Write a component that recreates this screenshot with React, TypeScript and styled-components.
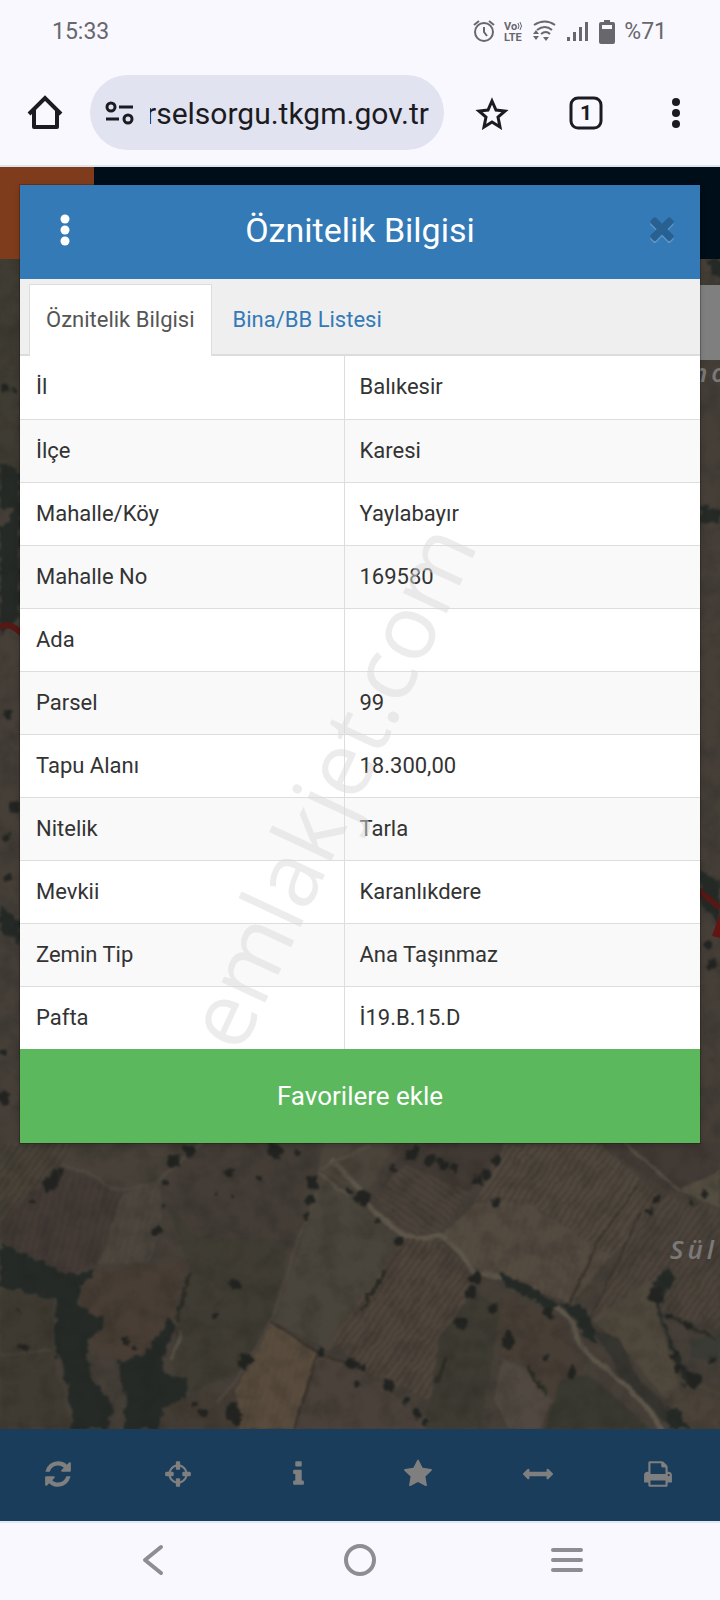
import React, { useState } from 'react';
import styled, { createGlobalStyle } from 'styled-components';

const GlobalStyle = createGlobalStyle`
  * {
    box-sizing: border-box;
  }
  body {
    margin: 0;
    font-family: Roboto, "Liberation Sans", sans-serif;
    background: #f9f8ff;
    color: #333;
  }
  button {
    padding: 0;
    border: 0;
    background: none;
    color: inherit;
    font: inherit;
    cursor: pointer;
  }
  svg {
    display: block;
  }
`;

const Screen = styled.div`
  position: relative;
  display: flex;
  flex-direction: column;
  min-height: 100vh;
  overflow: hidden;
`;

const StatusBar = styled.div`
  display: flex;
  align-items: center;
  justify-content: space-between;
  height: 60px;
  padding: 4px 53px 0 52px;
  font-size: 23px;
  line-height: 28px;
  color: #68676c;
`;

const StatusIcons = styled.div`
  display: flex;
  align-items: center;
  gap: 9px;
`;

const BrowserBar = styled.div`
  display: flex;
  align-items: center;
  height: 107px;
  border-bottom: 2px solid #dde4ee;
  color: #1b1b21;
`;

const BarButton = styled.button<{ $width: number }>`
  display: flex;
  align-items: center;
  justify-content: center;
  flex: none;
  width: ${({ $width }) => $width}px;
  height: 75px;
`;

const AddressBox = styled.label`
  display: flex;
  align-items: center;
  flex: 1;
  gap: 16px;
  min-width: 0;
  height: 75px;
  padding: 0 15px 0 14px;
  border-radius: 38px;
  background: #e2e3f0;
`;

const AddressInput = styled.input`
  flex: 1;
  min-width: 0;
  padding: 2px 0 0;
  border: 0;
  outline: 0;
  background: none;
  color: #1b1b21;
  font: 30px/40px Roboto, "Liberation Sans", sans-serif;
  direction: rtl;
`;

const Page = styled.div`
  display: grid;
  flex: 1;
`;

const Site = styled.div`
  display: flex;
  flex-direction: column;
  grid-area: 1 / 1;
  min-width: 0;
`;

const SiteHeader = styled.div`
  height: 92px;
  background: linear-gradient(to right, #fe7838 94px, #001c34 94px);
`;

const MapSvg = styled.svg`
  flex: 1;
  width: 100%;
  min-height: 0;
  height: 0;
`;

const MapLabel = styled.text`
  fill: #f4f2ee;
  font: italic 600 26px "Open Sans", "Noto Sans", sans-serif;
  letter-spacing: 4px;
`;

const SiteToolbar = styled.nav`
  display: grid;
  grid-template-columns: repeat(6, 1fr);
  height: 92px;
  background: #337ab7;
  color: #fff;
`;

const ToolButton = styled.button`
  display: flex;
  align-items: center;
  justify-content: center;
  padding: 0 4px 2px 0;
`;

const Backdrop = styled.div`
  grid-area: 1 / 1;
  z-index: 1;
  min-width: 0;
  padding: 18px 20px;
  background: rgba(0, 0, 0, 0.5);
`;

const Dialog = styled.section`
  background: #fff;
  box-shadow: 0 0 0 1px rgba(0, 0, 0, 0.2), 0 3px 6px rgba(0, 0, 0, 0.2);
`;

const DialogHeader = styled.header`
  display: grid;
  grid-template-columns: 90px 1fr 90px;
  align-items: center;
  height: 94px;
  padding-bottom: 4px;
  background: #337ab7;
  color: #fff;
`;

const DialogTitle = styled.h1`
  margin: 0;
  font-size: 34px;
  font-weight: 400;
  line-height: 48px;
  text-align: center;
`;

const MenuButton = styled.button`
  display: flex;
  justify-content: center;
`;

const CloseButton = styled.button`
  display: flex;
  justify-content: flex-end;
  padding-right: 24px;
  color: #000;
  opacity: 0.2;

  svg {
    filter: drop-shadow(0 2px 0 #fff);
  }
`;

const Tabs = styled.div`
  display: flex;
  align-items: flex-end;
  gap: 4px;
  height: 77px;
  padding: 0 9px;
  background: #efefef;
  box-shadow: inset 0 -2px 0 #dcdcdc;
`;

const Tab = styled.button<{ $active: boolean }>`
  height: 72px;
  padding: 0 16px 2px;
  border: 1px solid ${({ $active }) => ($active ? '#ddd' : 'transparent')};
  border-bottom: 0;
  background: ${({ $active }) => ($active ? '#fff' : 'transparent')};
  color: ${({ $active }) => ($active ? '#555' : '#337ab7')};
  font-size: 22px;
  line-height: 32px;
`;

const InfoTable = styled.table`
  width: 100%;
  border-collapse: collapse;
  table-layout: fixed;
  font-size: 22px;
  line-height: 30px;
  text-align: left;
`;

const Row = styled.tr`
  height: 63px;
  border-bottom: 1px solid #ddd;

  &:nth-child(even) {
    background: #f9f9f9;
  }
  &:last-child {
    border-bottom: 0;
  }
`;

const NameCell = styled.th`
  width: 324px;
  padding: 0 16px;
  border-right: 1px solid #ddd;
  font-weight: 400;
`;

const ValueCell = styled.td`
  padding: 0 15px;
`;

const FavoriteButton = styled.button`
  display: block;
  width: 100%;
  height: 94px;
  background: #5cb85c;
  color: #fff;
  font-size: 26px;
  line-height: 36px;
`;

const PhoneNav = styled.nav`
  display: grid;
  grid-template-columns: repeat(3, 1fr);
  height: 79px;
  padding: 0 50px 3px;
  border-top: 2px solid #dfe8f6;
  background: #f9f8ff;
  color: #8e8d93;
`;

const NavButton = styled.button`
  display: flex;
  align-items: center;
  justify-content: center;
`;

const Watermark = styled.div`
  position: absolute;
  inset: 0;
  z-index: 2;
  display: flex;
  align-items: center;
  justify-content: center;
  pointer-events: none;

  span {
    padding-bottom: 70px;
    transform: rotate(-65deg);
    color: rgba(217, 217, 217, 0.5);
    font: 90px/1 "Open Sans", "Noto Sans", sans-serif;
  }
`;

interface Glyph {
  width: number;
  path: string;
}

const glyphs: Record<string, Glyph> = {
  refresh: {
    width: 1536,
    path: 'M1511 1056q0 5-1 7-64 268-268 434.5T764 1664q-146 0-282.5-55T238 1452l-129 129q-19 19-45 19t-45-19-19-45v-448q0-26 19-45t45-19h448q26 0 45 19t19 45-19 45l-137 137q71 66 161 102t187 36q134 0 250-65t186-179q11-17 53-117 8-23 30-23h192q13 0 22.5 9.5t9.5 22.5zm25-800v448q0 26-19 45t-45 19h-448q-26 0-45-19t-19-45 19-45l138-138Q969 384 768 384q-134 0-250 65T332 628q-11 17-53 117-8 23-30 23H50q-13 0-22.5-9.5T18 736v-7q65-268 270-434.5T768 128q146 0 284 55.5T1297 340l130-129q19-19 45-19t45 19 19 45z',
  },
  crosshairs: {
    width: 1536,
    path: 'M1197 1024h-109q-26 0-45-19t-19-45v-128q0-26 19-45t45-19h109q-32-108-112.5-188.5T896 467v109q0 26-19 45t-45 19H704q-26 0-45-19t-19-45V467q-108 32-188.5 112.5T339 768h109q26 0 45 19t19 45v128q0 26-19 45t-45 19H339q32 108 112.5 188.5T640 1325v-109q0-26 19-45t45-19h128q26 0 45 19t19 45v109q108-32 188.5-112.5T1197 1024zm339-192v128q0 26-19 45t-45 19h-143q-37 161-154.5 278.5T896 1457v143q0 26-19 45t-45 19H704q-26 0-45-19t-19-45v-143q-161-37-278.5-154.5T207 1024H64q-26 0-45-19t-19-45V832q0-26 19-45t45-19h143q37-161 154.5-278.5T640 335V192q0-26 19-45t45-19h128q26 0 45 19t19 45v143q161 37 278.5 154.5T1329 768h143q26 0 45 19t19 45z',
  },
  info: {
    width: 640,
    path: 'M640 1344v128q0 26-19 45t-45 19H64q-26 0-45-19t-19-45v-128q0-26 19-45t45-19h64V896H64q-26 0-45-19t-19-45V704q0-26 19-45t45-19h384q26 0 45 19t19 45v576h64q26 0 45 19t19 45zM512 192v192q0 26-19 45t-45 19H192q-26 0-45-19t-19-45V192q0-26 19-45t45-19h256q26 0 45 19t19 45z',
  },
  star: {
    width: 1664,
    path: 'M1664 647q0 22-26 48l-363 354 86 500q1 7 1 20 0 21-10.5 35.5T1321 1619q-19 0-40-12l-449-236-449 236q-22 12-40 12-21 0-31.5-14.5T301 1569q0-6 2-20l86-500L25 695Q0 668 0 647q0-37 56-46l502-73L783 73q19-41 49-41t49 41l225 455 502 73q56 9 56 46z',
  },
  measure: {
    width: 1792,
    path: 'M1792 896q0 26-19 45l-256 256q-19 19-45 19t-45-19-19-45v-128H384v128q0 26-19 45t-45 19-45-19L19 941Q0 922 0 896t19-45l256-256q19-19 45-19t45 19 19 45v128h1024V640q0-26 19-45t45-19 45 19l256 256q19 19 19 45z',
  },
  print: {
    width: 1664,
    path: 'M384 1536h896v-256H384v256zm0-640h896V512h-160q-40 0-68-28t-28-68V256H384v640zm1152 64q0-26-19-45t-45-19-45 19-19 45 19 45 45 19 45-19 19-45zm128 0v416q0 13-9.5 22.5T1632 1408h-224v160q0 40-28 68t-68 28H352q-40 0-68-28t-28-68v-160H32q-13 0-22.5-9.5T0 1376V960q0-79 56.5-135.5T192 768h64V224q0-40 28-68t68-28h672q40 0 88 20t76 48l152 152q28 28 48 76t20 88v256h64q79 0 135.5 56.5T1664 960z',
  },
  times: {
    width: 1408,
    path: 'M1298 1214q0 40-28 68l-136 136q-28 28-68 28t-68-28l-294-294-294 294q-28 28-68 28t-68-28L138 1282q-28-28-28-68t28-68l294-294-294-294q-28-28-28-68t28-68l136-136q28-28 68-28t68 28l294 294 294-294q28-28 68-28t68 28l136 136q28 28 28 68t-28 68L976 852l294 294q28 28 28 68z',
  },
};

const Icon: React.FC<{ name: string; size: number }> = ({ name, size }) => {
  const { width, path } = glyphs[name];
  return (
    <svg
      width={Math.round((width * size) / 1792)}
      height={size}
      viewBox={`0 0 ${width} 1792`}
      fill="currentColor"
      aria-hidden="true"
    >
      <path d={path} />
    </svg>
  );
};

const Dots: React.FC<{ r: number }> = ({ r }) => (
  <svg width="12" height="34" viewBox="0 0 12 34" fill="currentColor" aria-hidden="true">
    <circle cx="6" cy="6" r={r} />
    <circle cx="6" cy="17" r={r} />
    <circle cx="6" cy="28" r={r} />
  </svg>
);

const PhoneStatus = () => (
  <StatusBar>
    <span>15:33</span>
    <StatusIcons>
      <svg width="22" height="24" viewBox="0 0 22 24" fill="none" stroke="currentColor" strokeWidth="2">
        <circle cx="11" cy="12" r="9" />
        <path d="M11 7v5l3 4M1 5l5-4M21 5l-5-4" />
      </svg>
      <svg width="20" height="24" viewBox="0 0 20 24" fill="currentColor" fontFamily="Roboto" fontWeight="700">
        <text x="0" y="10" fontSize="11">Vo</text>
        <text x="0" y="21" fontSize="11">LTE</text>
        <path d="M14 3q2 3 0 6M16 2q3 4 0 8" fill="none" stroke="currentColor" />
      </svg>
      <svg width="24" height="24" viewBox="0 0 24 24" fill="none" stroke="currentColor">
        <path d="M1 5q11-7 21 0M4 10q8-6 15 0M8 14q5-4 9 0" strokeWidth="2" />
        <path d="M10 17h6l-3 4zM0 14l3-4 3 4zM0 16h6l-3 4z" fill="currentColor" stroke="none" />
      </svg>
      <svg width="24" height="24" viewBox="0 0 24 24" fill="currentColor">
        <path d="M1 17h3v4H1zM7 12h3v9H7zM13 7h3v14h-3zM19 2h3v19h-3z" />
      </svg>
      <svg width="16" height="26" viewBox="0 0 16 26" fill="currentColor">
        <path
          fillRule="evenodd"
          d="M5 1h6v2h3q2 0 2 2v18q0 2-2 2H2q-2 0-2-2V5q0-2 2-2h3zM3 6v4h10V6z"
        />
      </svg>
      <span>%71</span>
    </StatusIcons>
  </StatusBar>
);

const Browser = () => (
  <BrowserBar>
    <BarButton $width={90} aria-label="Ana sayfa">
      <svg width="36" height="36" viewBox="0 0 36 36" fill="none" stroke="currentColor" strokeWidth="4">
        <path d="M2 19L18 3l16 16" />
        <path d="M7 15v17h23V15" strokeLinejoin="round" />
      </svg>
    </BarButton>
    <AddressBox>
      <svg width="30" height="26" viewBox="0 0 30 26" fill="none" stroke="currentColor" strokeWidth="3">
        <circle cx="7" cy="7" r="4" />
        <circle cx="24" cy="19" r="4" />
        <path d="M15 7h14M2 19h13" />
      </svg>
      <AddressInput aria-label="Adres" defaultValue="rselsorgu.tkgm.gov.tr" />
    </AddressBox>
    <BarButton $width={96} aria-label="Yer işareti">
      <svg width="34" height="34" viewBox="0 0 34 34" fill="none" stroke="currentColor" strokeWidth="3">
        <path d="M17 5l4 9 9 1-7 6 2 10-8-5-8 5 2-10-7-6 9-1z" />
      </svg>
    </BarButton>
    <BarButton $width={92} aria-label="Sekmeler">
      <svg width="36" height="36" viewBox="0 0 36 36">
        <rect x="3" y="3" width="30" height="30" rx="7" fill="none" stroke="currentColor" strokeWidth="3" />
        <text x="18" y="25" textAnchor="middle" fontFamily="Roboto" fontSize="21" fontWeight="700" fill="currentColor">
          1
        </text>
      </svg>
    </BarButton>
    <BarButton $width={88} aria-label="Menü">
      <Dots r={4} />
    </BarButton>
  </BrowserBar>
);

// [fill, outline, furrow pattern]
const fields: [string, string, string?][] = [
  ['#928674', 'M0 1143H75L62 1166 0 1222z', 'furrowUp'],
  ['#8e8272', 'M75 1140H180L166 1170 130 1190 96 1182 62 1163z'],
  ['#84726a', 'M62 1166L100 1182 122 1195 98 1264 70 1276 0 1240V1222z', 'furrowSteep'],
  ['#958979', 'M122 1195L160 1180 162 1230 150 1262 98 1264z', 'furrowSteep'],
  ['#877a6d', 'M180 1150L205 1138H320L305 1185 290 1240 200 1245 168 1210z'],
  ['#7f7867', 'M165 1200L195 1235 290 1240 272 1320 240 1370 185 1395 170 1360 190 1270z'],
  ['#907c6a', 'M88 1270L185 1262 170 1335 140 1365 95 1355 80 1300z'],
  ['#7d7564', 'M0 1290H55L52 1350 0 1355z'],
  ['#7f7666', 'M0 1355L52 1352 72 1429H0z'],
  ['#877868', 'M160 1400L235 1390 245 1429H150z'],
  ['#b0967a', 'M272 1323L318 1352 295 1429H240L236 1390z', 'furrowSteep'],
  ['#948375', 'M318 1352L356 1366 440 1429H295z'],
  ['#938a78', 'M318 1175L360 1205 402 1240 330 1350 272 1320 303 1240z'],
  ['#968978', 'M325 1140H400L365 1195 318 1170z'],
  ['#827268', 'M405 1143H510L470 1190 415 1180 380 1190z'],
  ['#988878', 'M375 1195L405 1165 470 1192 435 1238 400 1238z', 'furrowDown'],
  ['#a08d7c', 'M402 1240L440 1240 475 1275 430 1400 365 1370 330 1340z', 'furrowUp'],
  ['#a3927f', 'M505 1145H600L660 1195 610 1260 540 1210 475 1200z', 'furrowUp'],
  ['#a5937f', 'M475 1203L525 1202 610 1256 572 1304 475 1268 440 1236z', 'furrowSteep'],
  ['#857469', 'M600 1143H720V1170L668 1192z'],
  ['#a89b83', 'M680 1189L720 1170V1208L700 1200z'],
  ['#9b8b7a', 'M665 1195L720 1210V1330L660 1310 640 1360 590 1318 625 1240z', 'furrowUp'],
  ['#9f907a', 'M592 1320L650 1280 680 1385 665 1400 625 1350z'],
  ['#7a7664', 'M440 1338L475 1290 500 1310 480 1429H425z'],
  ['#8f7d6c', 'M500 1290L560 1320 580 1365 600 1429H530L500 1360z'],
  ['#a29282', 'M502 1358L530 1370 552 1400 540 1429H510L494 1400z'],
  ['#747262', 'M560 1380L590 1375 650 1429H545z'],
  ['#968573', 'M672 1390L720 1400V1429H675z'],
  ['#76766a', 'M690 1340L720 1335V1360L690 1358z'],
];

const tracks: [string, number, string][] = [
  ['#bbac95', 5, 'M330 1160q25 18 42 50 20 15 32 26 14 5 36 0 20 12 34 37 40 2 62 25 30 12 37 26 6 30 35 45 45 40 55 64'],
  ['#9c8f80', 3, 'M60 1165q30 5 48 22 26 6 50-7 24-20 45-38M325 1175l-25 60-28 85-35 60-20 22'],
  ['#ad9f8a', 3, 'M180 1330q0 12-9 30M370 1145l-50 24M318 1172l30 24M680 1190l-62-52'],
  ['#6d6355', 2, 'M272 1322l46 30 35 14M636 1186l-40 60-26 58M318 1352l-24 76M640 1212l-48 105'],
  ['#94866f', 3, 'M680 1380l40 12M660 1320l20 65-5 44M0 1290l55-2M0 1355l52-5'],
];

const woods = [
  'M0 1242L18 1252 42 1262 68 1275 98 1268 80 1288 78 1305 102 1318 104 1329 86 1340 92 1380 112 1402 108 1429H72L70 1395 54 1345 56 1300 0 1287z',
  'M116 1362l30-8 22-34 8 6-16 40 10 10 18 4-4 18-20 10-6 22h-34l2-32z',
  'M558 1302l22 2 12 20 6 22-12-8-12-20z',
  'M664 1408l14 2 12 19h-20z',
  'M670 1265l4 16-16 20 4 16 18 42 12 20-8 6-10-26-16-48-6-28z',
  'M500 1272l40 20 18 14-8 4-50-30z',
  'M0 460l20 12v36H0zM0 530q16-14 20-34v120l-20 20z',
  'M0 905l20 16v24L0 930zM700 870l20 14v44l-20-26zM700 505l20 6v12h-20z',
  'M706 259h14v26z',
];

const trees: [number, number, number][] = [
  [189, 1151, 7], [174, 1161, 6], [50, 1184, 7], [55, 1178, 6], [62, 1172, 3], [32, 1203, 2],
  [276, 1151, 8], [297, 1154, 3], [312, 1181, 6], [310, 1201, 5], [305, 1215, 4], [229, 1172, 4],
  [259, 1178, 3], [166, 1183, 4], [157, 1230, 5], [163, 1206, 2], [217, 1193, 2], [231, 1195, 2],
  [363, 1198, 8], [350, 1192, 3], [393, 1168, 3], [410, 1156, 6], [416, 1152, 5], [430, 1160, 5],
  [442, 1164, 6], [455, 1168, 4], [477, 1180, 6], [487, 1173, 5], [497, 1160, 5], [496, 1201, 5],
  [376, 1220, 2], [399, 1241, 4], [471, 1293, 6], [476, 1278, 5], [461, 1323, 6], [493, 1308, 5],
  [548, 1313, 6], [508, 1343, 7], [509, 1334, 5], [545, 1356, 3], [390, 1386, 6], [362, 1368, 4],
  [417, 1413, 5], [406, 1400, 4], [425, 1423, 3], [247, 1358, 6], [243, 1363, 5], [233, 1412, 8],
  [238, 1420, 5], [203, 1413, 4], [194, 1404, 3], [321, 1352, 3], [352, 1364, 6], [356, 1384, 4],
  [656, 1200, 4], [648, 1212, 3], [656, 1297, 8], [694, 1380, 8], [668, 1315, 4], [688, 1325, 4],
  [674, 1355, 4], [678, 1368, 4], [712, 1361, 4], [705, 1194, 3], [692, 1203, 3], [572, 1371, 5],
  [125, 1341, 4], [134, 1348, 3], [22, 1347, 4], [18, 1312, 2], [235, 1285, 5], [214, 1315, 4],
  [6, 388, 4], [14, 391, 3], [8, 714, 5], [14, 807, 5], [7, 837, 3], [8, 877, 3], [4, 1098, 6],
  [708, 945, 5], [712, 964, 6], [4, 1052, 3],
];

const AerialMap = () => (
  <MapSvg viewBox="0 259 720 1170" preserveAspectRatio="xMidYMid slice" aria-hidden="true">
    <defs>
      <pattern id="furrowUp" width="6" height="20" patternUnits="userSpaceOnUse" patternTransform="rotate(35)">
        <path d="M1 0v20" stroke="#58483b" strokeOpacity=".3" strokeWidth="2" />
      </pattern>
      <pattern id="furrowDown" width="6" height="20" patternUnits="userSpaceOnUse" patternTransform="rotate(-55)">
        <path d="M1 0v20" stroke="#58483b" strokeOpacity=".25" strokeWidth="2" />
      </pattern>
      <pattern id="furrowSteep" width="7" height="20" patternUnits="userSpaceOnUse" patternTransform="rotate(15)">
        <path d="M1 0v20" stroke="#d0bfa0" strokeOpacity=".12" strokeWidth="2" />
      </pattern>
      <filter id="soft" x="-5%" y="-5%" width="110%" height="110%" colorInterpolationFilters="sRGB">
        <feTurbulence type="fractalNoise" baseFrequency=".06" numOctaves="3" seed="4" />
        <feDisplacementMap in="SourceGraphic" scale="5" xChannelSelector="R" yChannelSelector="G" />
        <feGaussianBlur stdDeviation=".8" />
      </filter>
      <filter id="rough" x="-5%" y="-5%" width="110%" height="110%" colorInterpolationFilters="sRGB">
        <feTurbulence type="fractalNoise" baseFrequency=".12" numOctaves="3" seed="4" />
        <feDisplacementMap in="SourceGraphic" scale="10" xChannelSelector="R" yChannelSelector="G" />
        <feGaussianBlur stdDeviation=".8" />
      </filter>
      <filter id="grain" x="0" y="0" width="100%" height="100%" colorInterpolationFilters="sRGB">
        <feTurbulence type="fractalNoise" baseFrequency=".05" numOctaves="6" seed="8" />
        <feColorMatrix values="0 0 0 0 .22  0 0 0 0 .22  0 0 0 0 .18  2 0 0 0 -.8" />
      </filter>
    </defs>
    <rect y="259" width="720" height="1170" fill="#8a7e70" />
    <rect y="259" width="20" height="240" fill="#7f7866" />
    <g filter="url(#soft)">
      {fields.map(([fill, d, pattern]) => (
        <g key={d}>
          <path d={d} fill={fill} />
          {pattern && <path d={d} fill={`url(#${pattern})`} />}
        </g>
      ))}
      <path d="M592 1330l28 8 14 34 24 26 12 16-6 8-38-40z" fill="#6d6a60" />
      {tracks.map(([stroke, width, d]) => (
        <path key={d} d={d} fill="none" stroke={stroke} strokeWidth={width} />
      ))}
    </g>
    <g filter="url(#rough)">
      {woods.map((d) => (
        <path key={d} d={d} fill="#4b554e" />
      ))}
      <path
        d="M190 1272l-14 48M387 1270l-26 40M446 1358l-8 24M528 1368l20 28M716 1338l-50-22"
        fill="none"
        stroke="#565849"
        strokeWidth="4"
      />
      {trees.map(([x, y, r]) => (
        <circle key={`${x}-${y}`} cx={x} cy={y} r={r} fill="#464842" />
      ))}
    </g>
    <rect y="259" width="720" height="1170" filter="url(#grain)" opacity=".25" />
    <rect x="690" y="285" width="30" height="75" fill="#fff" />
    <path d="M0 628q8-8 22 6M698 890l22 18" fill="none" stroke="#a8302a" strokeWidth="6" />
    <path d="M712 936l8-22v24z" fill="#c62a24" />
    <MapLabel x="692" y="382">no</MapLabel>
    <MapLabel x="670" y="1259">Sül</MapLabel>
  </MapSvg>
);

const tools = [
  { icon: 'refresh', label: 'Yenile' },
  { icon: 'crosshairs', label: 'Konum' },
  { icon: 'info', label: 'Bilgi' },
  { icon: 'star', label: 'Favoriler' },
  { icon: 'measure', label: 'Ölçüm' },
  { icon: 'print', label: 'Yazdır' },
];

const tabs = ['Öznitelik Bilgisi', 'Bina/BB Listesi'];

const parcel = [
  ['İl', 'Balıkesir'],
  ['İlçe', 'Karesi'],
  ['Mahalle/Köy', 'Yaylabayır'],
  ['Mahalle No', '169580'],
  ['Ada', ''],
  ['Parsel', '99'],
  ['Tapu Alanı', '18.300,00'],
  ['Nitelik', 'Tarla'],
  ['Mevkii', 'Karanlıkdere'],
  ['Zemin Tip', 'Ana Taşınmaz'],
  ['Pafta', 'İ19.B.15.D'],
];

const ParcelDialog = () => {
  const [activeTab, setActiveTab] = useState(0);

  return (
    <Dialog role="dialog" aria-labelledby="dialog-title">
      <DialogHeader>
        <MenuButton aria-label="Seçenekler">
          <Dots r={4.5} />
        </MenuButton>
        <DialogTitle id="dialog-title">Öznitelik Bilgisi</DialogTitle>
        <CloseButton aria-label="Kapat">
          <Icon name="times" size={36} />
        </CloseButton>
      </DialogHeader>
      <Tabs role="tablist">
        {tabs.map((tab, i) => (
          <Tab
            key={tab}
            role="tab"
            aria-selected={i === activeTab}
            $active={i === activeTab}
            onClick={() => setActiveTab(i)}
          >
            {tab}
          </Tab>
        ))}
      </Tabs>
      <InfoTable>
        <tbody>
          {parcel.map(([name, value]) => (
            <Row key={name}>
              <NameCell scope="row">{name}</NameCell>
              <ValueCell>{value}</ValueCell>
            </Row>
          ))}
        </tbody>
      </InfoTable>
      <FavoriteButton>Favorilere ekle</FavoriteButton>
    </Dialog>
  );
};

const App: React.FC = () => (
  <>
    <GlobalStyle />
    <Screen lang="tr">
      <PhoneStatus />
      <Browser />
      <Page>
        <Site>
          <SiteHeader />
          <AerialMap />
          <SiteToolbar>
            {tools.map(({ icon, label }) => (
              <ToolButton key={icon} aria-label={label}>
                <Icon name={icon} size={30} />
              </ToolButton>
            ))}
          </SiteToolbar>
        </Site>
        <Backdrop>
          <ParcelDialog />
        </Backdrop>
      </Page>
      <PhoneNav>
        <NavButton aria-label="Geri">
          <svg width="22" height="32" viewBox="0 0 22 32" fill="none" stroke="currentColor" strokeWidth="4" strokeLinecap="round" strokeLinejoin="round">
            <path d="M19 3L3 16l16 13" />
          </svg>
        </NavButton>
        <NavButton aria-label="Ana ekran">
          <svg width="32" height="32" viewBox="0 0 32 32" fill="none" stroke="currentColor" strokeWidth="4">
            <circle cx="16" cy="16" r="14" />
          </svg>
        </NavButton>
        <NavButton aria-label="Son uygulamalar">
          <svg width="32" height="32" viewBox="0 0 32 32" fill="none" stroke="currentColor" strokeWidth="4" strokeLinecap="round">
            <path d="M2 6h28M2 16h28M2 26h28" />
          </svg>
        </NavButton>
      </PhoneNav>
      <Watermark>
        <span>emlakjet.com</span>
      </Watermark>
    </Screen>
  </>
);

export default App;
